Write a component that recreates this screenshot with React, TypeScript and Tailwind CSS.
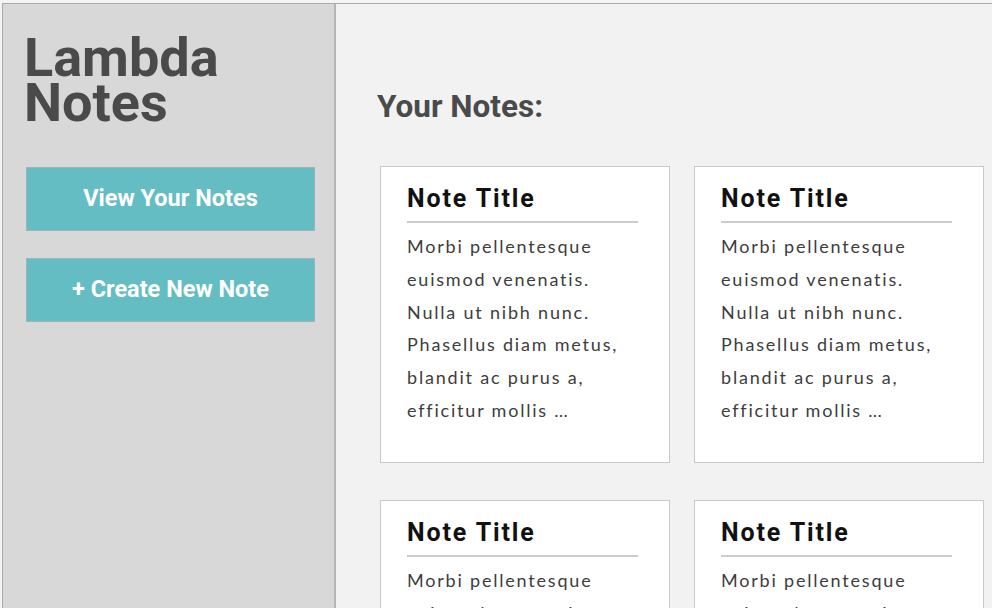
const BODY = [
  'Morbi pellentesque',
  'euismod venenatis.',
  'Nulla ut nibh nunc.',
  'Phasellus diam metus,',
  'blandit ac purus a,',
  'efficitur mollis …',
];

const NOTES = Array.from({ length: 4 }, (_, i) => ({ id: i, title: 'Note Title', lines: BODY }));

function NoteCard({ title, lines }: { title: string; lines: string[] }) {
  return (
    <div className="w-[290px] h-[297px] bg-white border border-[#c9c9c9] px-[26px] pt-[14px]">
      <h3 className="font-['Roboto',sans-serif] font-bold text-[25px] leading-[36px] tracking-[0.075em] text-[#111]">
        {title}
      </h3>
      <div className="h-[2px] w-[231px] bg-[#cccccc] mt-[4px]" />
      <p className="mt-[7px] whitespace-nowrap font-['Lato',sans-serif] text-[18px] leading-[32.8px] tracking-[0.1em] text-[#3d3d3d]">
        {lines.map((l, i) => (
          <span key={i} className="block">
            {l}
          </span>
        ))}
      </p>
    </div>
  );
}

export default function App() {
  return (
    <div className="w-[992px] h-[608px] overflow-hidden bg-[#f4f4f4] pt-[3px] pl-[2px]">
      <div className="flex h-full border-t border-l border-[#a9a9a9]">
        <aside className="w-[333px] shrink-0 bg-[#d8d8d8] border-r-2 border-[#b4b4b4] px-[21px] pt-[31px]">
          <h1 className="font-['Roboto',sans-serif] font-bold text-[54px] leading-[45px] text-[#4a4a4a]">
            <span className="block">Lambda</span>
            <span className="block">Notes</span>
          </h1>
          <div className="mt-[42px] ml-[2px] flex flex-col gap-[27px]">
            <button className="w-[289px] h-[64px] bg-[#64bdc3] border border-[#9eb5b7] font-['Roboto',sans-serif] font-bold text-[23.5px] text-white">
              View Your Notes
            </button>
            <button className="w-[289px] h-[64px] bg-[#64bdc3] border border-[#9eb5b7] font-['Roboto',sans-serif] font-bold text-[23.5px] text-white">
              + Create New Note
            </button>
          </div>
        </aside>
        <main className="flex-1 bg-[#f2f2f2] pl-[41px] pt-[83px]">
          <h2 className="font-['Roboto',sans-serif] font-bold text-[31.5px] leading-[40px] text-[#4a4a4a]">
            Your Notes:
          </h2>
          <div className="mt-[39px] ml-[3px] grid grid-cols-[290px_290px] gap-x-[24px] gap-y-[37px]">
            {NOTES.map((n) => (
              <NoteCard key={n.id} title={n.title} lines={n.lines} />
            ))}
          </div>
        </main>
      </div>
    </div>
  );
}
